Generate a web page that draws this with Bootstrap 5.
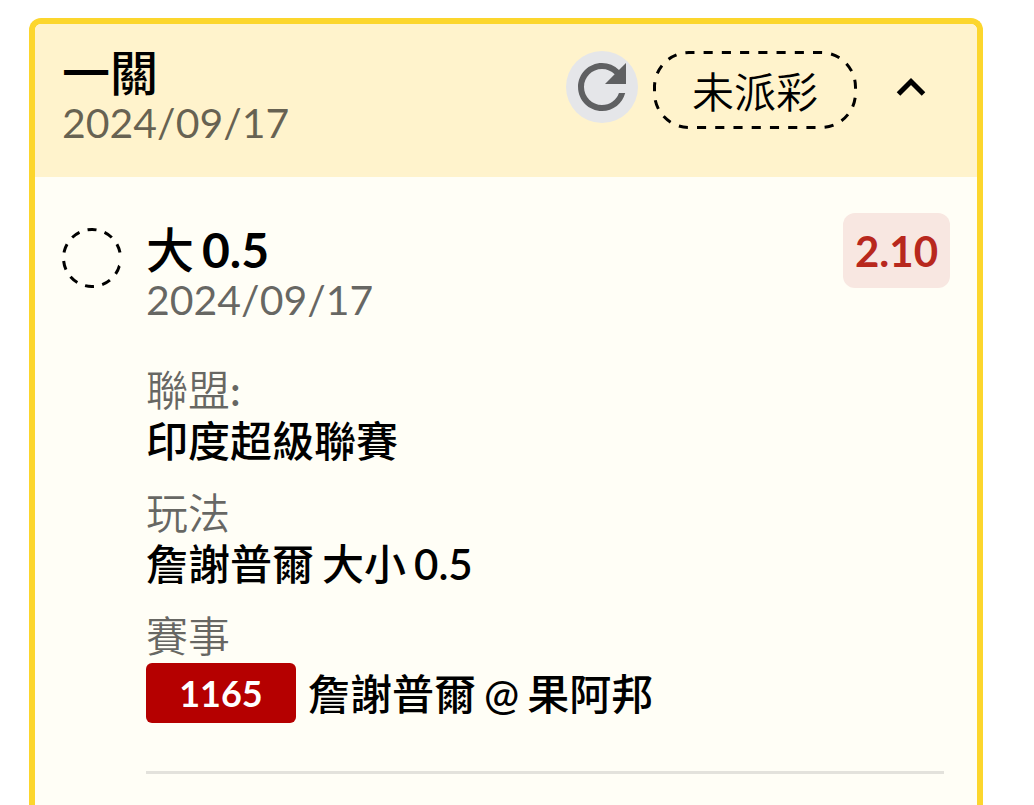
<!DOCTYPE html>
<html lang="zh-Hant">
<head>
<meta charset="utf-8">
<meta name="viewport" content="width=device-width, initial-scale=1">
<title>注單</title>
<link href="https://cdn.jsdelivr.net/npm/bootstrap@5.3.0/dist/css/bootstrap.min.css" rel="stylesheet">
<style>
  body { font: 400 42px/51px Lato, "Noto Sans CJK TC", sans-serif; color: #000; background: #fff; }
  .page { padding: 18px 51px 0 29px; }
  .slip { border: 6px solid #fcd62d; border-bottom: 0; border-radius: 12px 12px 0 0; background: #fffef6; overflow: hidden; }
  .slip-head { background: #fff3cc; padding: 24px 27px 29px; }
  .slip-body { padding: 36px 27px; gap: 24px; }
  .slip-title { font-size: 48px; line-height: 50px; font-weight: 500; margin: 0; }
  .slip-date { font-size: 41px; line-height: 50px; color: rgba(0,0,0,.6); margin: 0; }
  .head-tools { gap: 15px; padding-top: 3px; }
  .reload { width: 72px; height: 72px; background: #e5e6e9; color: #5f6062; }
  .state { width: 204px; height: 78px; padding-top: 4px; font-weight: 350; }
  .fold { width: 78px; height: 72px; }
  .pending { margin-top: 15px; }
  .pick { padding-top: 12px; }
  .odds { background: #f8e7e1; color: #b8281d; height: 75px; line-height: 77px; padding: 0 12px; border-radius: 12px; font-weight: 700; }
  .facts { margin: 40px 0 0; }
  .facts dt { font-weight: 350; color: rgba(0,0,0,.6); }
  .facts dd { font-weight: 500; margin: 0 0 21px; }
  .facts dd.match { gap: 12px; margin-bottom: 48px; padding-top: 1px; }
  .match-no { width: 150px; height: 60px; line-height: 61px; font-size: 36px; font-weight: 700; background: #b50000; color: #fff; border-radius: 6px; }
  .teams { padding-top: 3px; }
  .num { font-weight: 600; }
  .slip-title .num { font-weight: 700; }
  .rule { border-top: 3px solid #e3e2dc; opacity: 1; margin: 0 6px 0 0; }
</style>
</head>
<body>
<main class="page min-vh-100 d-flex flex-column">
  <article class="slip flex-grow-1">
    <header class="slip-head d-flex justify-content-between align-items-start">
      <div>
        <h1 class="slip-title">一關</h1>
        <p class="slip-date">2024/09/17</p>
      </div>
      <div class="head-tools d-flex align-items-start">
        <button type="button" class="reload btn border-0 rounded-circle p-0 d-flex" aria-label="重新整理">
          <svg width="72" height="72" viewBox="0 0 24 24" fill="currentColor" aria-hidden="true"><path d="M17.65 6.35A7.958 7.958 0 0 0 12 4c-4.42 0-7.99 3.58-7.99 8s3.57 8 7.99 8c3.73 0 6.84-2.55 7.73-6h-2.08A5.99 5.99 0 0 1 12 18c-3.31 0-6-2.69-6-6s2.69-6 6-6c1.66 0 3.14.69 4.22 1.78L13 11h7V4l-2.35 2.35z"/></svg>
        </button>
        <span class="state position-relative d-flex align-items-center justify-content-center">
          <svg class="position-absolute top-0 start-0" width="204" height="78" fill="none" stroke="#000" stroke-width="3" aria-hidden="true"><rect x="1.5" y="1.5" width="201" height="75" rx="34.5" pathLength="540" stroke-dasharray="10 10" stroke-dashoffset="4"/></svg>
          未派彩
        </span>
        <button type="button" class="fold btn border-0 p-0 d-flex align-items-center justify-content-center" aria-label="收合">
          <svg width="30" height="20" viewBox="0 0 30 20" fill="none" stroke="#000" stroke-width="5" aria-hidden="true"><path d="M2.500 17 15 4.500 27.500 17"/></svg>
        </button>
      </div>
    </header>
    <section class="slip-body d-flex align-items-start">
      <svg class="pending flex-shrink-0" width="60" height="60" viewBox="0 0 60 60" fill="none" stroke="#000" stroke-width="3" aria-hidden="true"><circle cx="30" cy="30" r="28.5" pathLength="360" transform="rotate(16 30 30)" stroke-dasharray="18 17 18 17 18 17 18 17 18 17 18 17 18 17 18 17 18 17 18 27"/></svg>
      <div class="flex-grow-1">
        <div class="d-flex justify-content-between align-items-start">
          <div class="pick">
            <h2 class="slip-title d-flex gap-2"><span>大</span> <span class="num">0.5</span></h2>
            <p class="slip-date">2024/09/17</p>
          </div>
          <span class="odds">2.10</span>
        </div>
        <dl class="facts">
          <dt>聯盟<span class="num">:</span></dt>
          <dd>印度超級聯賽</dd>
          <dt>玩法</dt>
          <dd class="d-flex gap-2"><span>詹謝普爾</span> <span>大小</span> <span class="num">0.5</span></dd>
          <dt>賽事</dt>
          <dd class="match d-flex align-items-center"><span class="match-no text-center">1165</span><span class="teams d-flex gap-2"><span>詹謝普爾</span> <span>@</span> <span>果阿邦</span></span></dd>
        </dl>
        <hr class="rule">
      </div>
    </section>
  </article>
</main>
<script src="https://cdn.jsdelivr.net/npm/bootstrap@5.3.0/dist/js/bootstrap.bundle.min.js"></script>
</body>
</html>
